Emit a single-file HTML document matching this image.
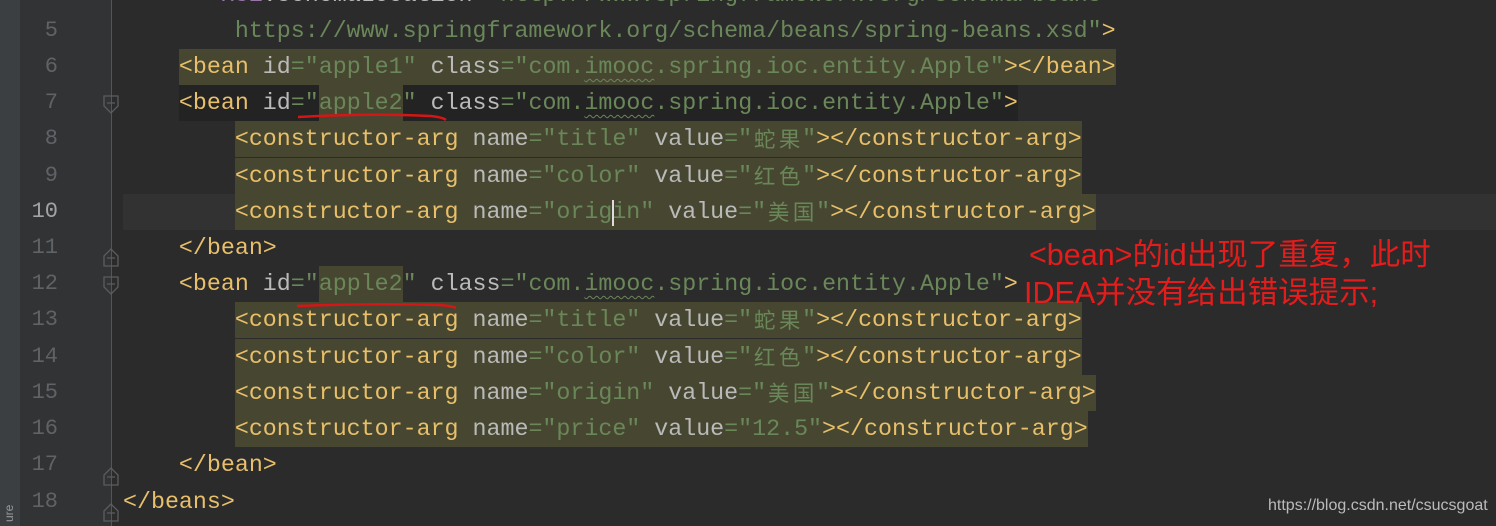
<!DOCTYPE html>
<html><head><meta charset="utf-8"><style>
html,body{margin:0;padding:0;width:1496px;height:526px;overflow:hidden;background:#2b2b2b;}
.strip{position:absolute;left:0;top:0;width:20px;height:526px;background:#3c3f41;}
.gut{position:absolute;left:20px;top:0;width:91px;height:526px;background:#313335;}
.gl{position:absolute;left:111px;top:0;width:1px;height:526px;background:#555;}
.ln{position:absolute;left:20px;width:38px;text-align:right;font:22px "Liberation Mono",monospace;color:#606366;line-height:36px;}
.code{position:absolute;left:123px;font:23.3px "Liberation Mono","Noto Sans CJK SC",monospace;line-height:36px;height:36px;white-space:pre;color:#bababa;}
.t{color:#e8bf6a}.s{color:#6a8759}.p{color:#9876aa}
.hl{background:#474731;display:inline-block;line-height:36px;height:36px;vertical-align:top}
.dk{background:#232323;display:inline-block;line-height:36px;height:36px;vertical-align:top}
.c{display:inline-block;width:25px;font-size:21.5px;text-align:center;font-family:"Noto Sans CJK SC",sans-serif;line-height:36px;vertical-align:top}
.w{text-decoration:underline wavy #6a8759;text-decoration-thickness:1px;text-underline-offset:5px}
.ann{position:absolute;color:#e51c1c;font:30.5px "Liberation Sans","Noto Sans CJK SC",sans-serif;white-space:nowrap;}
</style></head><body>
<div class="strip"><div style="position:absolute;bottom:4px;transform:rotate(-90deg);transform-origin:left bottom;color:#999;font:12px 'Liberation Sans',sans-serif;width:30px;left:16px;">ure</div></div>
<div class="gut"></div>
<div style="position:absolute;left:123px;top:194px;width:1373px;height:36px;background:#323232"></div>
<div class="gl"></div>

<div class="ln" style="top:-23px">4</div>
<div class="ln" style="top:13px">5</div>
<div class="ln" style="top:49px">6</div>
<div class="ln" style="top:85px">7</div>
<div class="ln" style="top:121px">8</div>
<div class="ln" style="top:158px">9</div>
<div class="ln" style="top:194px;color:#a4a3a3">10</div>
<div class="ln" style="top:230px">11</div>
<div class="ln" style="top:266px">12</div>
<div class="ln" style="top:302px">13</div>
<div class="ln" style="top:339px">14</div>
<div class="ln" style="top:375px">15</div>
<div class="ln" style="top:411px">16</div>
<div class="ln" style="top:447px">17</div>
<div class="ln" style="top:484px">18</div>

<svg style="position:absolute;left:0;top:0" width="130" height="526">
<g fill="none" stroke="#5a5d5f" stroke-width="1.3">
<path d="M104 96h14v10l-7 7l-7-7z M107 103h8"/>
<path d="M104 256l7-7l7 7v10h-14z M107 258h8"/>
<path d="M104 277h14v10l-7 7l-7-7z M107 284h8"/>
<path d="M104 475l7-7l7 7v10h-14z M107 477h8"/>
<path d="M104 511l7-7l7 7v10h-14z M107 513h8"/>
</g></svg>

<div class="code" style="top:-23px">       <span class="p">xsi</span>:schemaLocation=<span class="s">"http://www.springframework.org/schema/beans</span></div>
<div class="code" style="top:13px">        <span class="s">https://www.springframework.org/schema/beans/spring-beans.xsd"</span><span class="t">&gt;</span></div>
<div class="code" style="top:49px">    <span class="hl"><span class="t">&lt;bean</span> id<span class="s">="apple1"</span> class<span class="s">="com.<span class="w">imooc</span>.spring.ioc.entity.Apple"</span><span class="t">&gt;&lt;/bean&gt;</span></span></div>
<div class="code" style="top:85px">    <span class="dk"><span class="t">&lt;bean</span> id<span class="s">="<span class="hl">apple2</span>"</span> class<span class="s">="com.<span class="w">imooc</span>.spring.ioc.entity.Apple"</span><span class="t">&gt;</span></span></div>
<div class="code" style="top:121px">        <span class="hl"><span class="t">&lt;constructor-arg</span> name<span class="s">="title"</span> value<span class="s">="<span class="c">蛇</span><span class="c">果</span>"</span><span class="t">&gt;&lt;/constructor-arg&gt;</span></span></div>
<div class="code" style="top:158px">        <span class="hl"><span class="t">&lt;constructor-arg</span> name<span class="s">="color"</span> value<span class="s">="<span class="c">红</span><span class="c">色</span>"</span><span class="t">&gt;&lt;/constructor-arg&gt;</span></span></div>
<div class="code" style="top:194px">        <span class="hl"><span class="t">&lt;constructor-arg</span> name<span class="s">="origin"</span> value<span class="s">="<span class="c">美</span><span class="c">国</span>"</span><span class="t">&gt;&lt;/constructor-arg&gt;</span></span></div>
<div style="position:absolute;left:612px;top:200px;width:2px;height:26px;background:#ddd"></div>
<div class="code" style="top:230px">    <span class="t">&lt;/bean&gt;</span></div>
<div class="code" style="top:266px">    <span class="t">&lt;bean</span> id<span class="s">="<span class="hl">apple2</span>"</span> class<span class="s">="com.<span class="w">imooc</span>.spring.ioc.entity.Apple"</span><span class="t">&gt;</span></div>
<div class="code" style="top:302px">        <span class="hl"><span class="t">&lt;constructor-arg</span> name<span class="s">="title"</span> value<span class="s">="<span class="c">蛇</span><span class="c">果</span>"</span><span class="t">&gt;&lt;/constructor-arg&gt;</span></span></div>
<div class="code" style="top:339px">        <span class="hl"><span class="t">&lt;constructor-arg</span> name<span class="s">="color"</span> value<span class="s">="<span class="c">红</span><span class="c">色</span>"</span><span class="t">&gt;&lt;/constructor-arg&gt;</span></span></div>
<div class="code" style="top:375px">        <span class="hl"><span class="t">&lt;constructor-arg</span> name<span class="s">="origin"</span> value<span class="s">="<span class="c">美</span><span class="c">国</span>"</span><span class="t">&gt;&lt;/constructor-arg&gt;</span></span></div>
<div class="code" style="top:411px">        <span class="hl"><span class="t">&lt;constructor-arg</span> name<span class="s">="price"</span> value<span class="s">="12.5"</span><span class="t">&gt;&lt;/constructor-arg&gt;</span></span></div>
<div class="code" style="top:447px">    <span class="t">&lt;/bean&gt;</span></div>
<div class="code" style="top:484px"><span class="t">&lt;/beans&gt;</span></div>

<svg style="position:absolute;left:0;top:0" width="1496" height="526">
<path d="M298 117 Q370 113 430 116 Q442 117 446 120" stroke="#d41616" stroke-width="2.5" fill="none"/>
<path d="M297 306 Q380 303 440 305 Q452 306 456 308" stroke="#d41616" stroke-width="2.5" fill="none"/>
</svg>

<div class="ann" style="left:1029px;top:230px">&lt;bean&gt;的id出现了重复，此时</div>
<div class="ann" style="left:1024px;top:268px">IDEA并没有给出错误提示;</div>
<div style="position:absolute;left:1268px;top:497px;color:#bbb;font:16px 'Liberation Sans',sans-serif">https://blog.csdn.net/csucsgoat</div>
</body></html>
